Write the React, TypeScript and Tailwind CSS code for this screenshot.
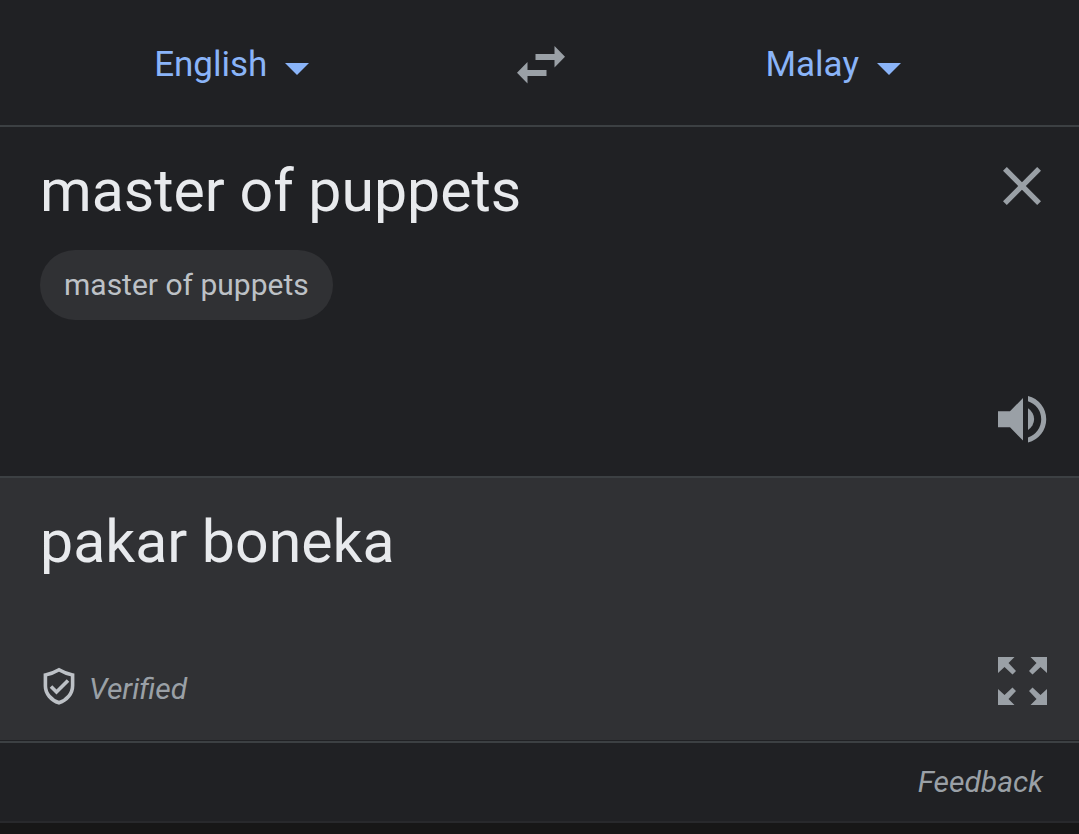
import React, { useState } from "react";

// ─── Icons ───────────────────────────────────────────────────────

function CaretIcon() {
  return (
    <svg width="24" height="12" viewBox="0 0 24 12" fill="currentColor" aria-hidden="true">
      <path d="M0 0h24L12 12z" />
    </svg>
  );
}

function SwapIcon() {
  return (
    <svg width="48" height="38" viewBox="0 0 48 38" fill="currentColor" aria-hidden="true">
      <path d="M18.5 8h19V0L48 10.8 37.5 21.5V14h-19z" />
      <path d="M29.5 24h-19v-8L0 26.8l10.5 10.7V30h19z" />
    </svg>
  );
}

function CloseIcon() {
  return (
    <svg width="38" height="38" viewBox="5 5 14 14" fill="currentColor" aria-hidden="true">
      <path d="M19 6.41 17.59 5 12 10.59 6.41 5 5 6.41 10.59 12 5 17.59 6.41 19 12 13.41 17.59 19 19 17.59 13.41 12z" />
    </svg>
  );
}

function SpeakerIcon() {
  return (
    <svg width="49" height="47" viewBox="0 0 49 47" fill="currentColor" aria-hidden="true">
      <path d="M0 15.3h12L25 2v42.5L12 31.3H0z" />
      <path d="M30 12.3a12.6 12.6 0 0 1 0 21.6z" />
      <path d="M30 0a24 24 0 0 1 0 46.6v-5.2a19 19 0 0 0 0-36.2z" />
    </svg>
  );
}

function ExpandIcon() {
  return (
    <svg width="49" height="48" viewBox="0 0 49 48" fill="currentColor" aria-hidden="true">
      <path d="M0 0h16.500l-6 6 7.500 8-3.500 3.500-8-7.500L0 16z" />
      <path d="M49 0H32.500l6 6-7.500 8 3.500 3.500 8-7.500L49 16z" />
      <path d="M0 48h16.500l-6-6 7.500-8-3.500-3.500-8 7.500L0 32z" />
      <path d="M49 48H32.500l6-6-7.500-8 3.500-3.500 8 7.500L49 32z" />
    </svg>
  );
}

function ShieldIcon() {
  return (
    <svg width="32" height="38" viewBox="0 0 32 38" fill="none" stroke="currentColor" strokeWidth="3.6" aria-hidden="true">
      <path d="M16 2.800c-4.400 2.600-8.800 4.400-13.600 5.200v11C2.400 26.500 8 33.200 16 35.800c8-2.600 13.600-9.300 13.600-17.400V8C24.800 7.200 20.400 5.400 16 2.800z" />
      <path d="M8 19.500l5.500 5.500L25 13.500" />
    </svg>
  );
}

// ─── Language picker ─────────────────────────────────────────────

interface LanguageSelectProps {
  label: string;
  value: string;
  options: string[];
  onChange: (value: string) => void;
}

function LanguageSelect({ label, value, options, onChange }: LanguageSelectProps) {
  return (
    <label className="flex items-center text-[#8ab4f8]">
      <span className="sr-only">{label}</span>
      <select
        value={value}
        onChange={(e) => onChange(e.target.value)}
        className="field-sizing-content h-14 cursor-pointer appearance-none bg-transparent py-0 pr-[18px] text-[35px] leading-[56px] outline-none"
      >
        {options.map((o) => (
          <option key={o}>{o}</option>
        ))}
      </select>
      <span className="pt-2">
        <CaretIcon />
      </span>
    </label>
  );
}

// ─── App ─────────────────────────────────────────────────────────

export default function App() {
  const [from, setFrom] = useState("English");
  const [to, setTo] = useState("Malay");
  const [text, setText] = useState("master of puppets");

  const swap = () => {
    setFrom(to);
    setTo(from);
  };

  return (
    <div className="flex min-h-screen flex-col bg-[#171717] font-[Roboto,sans-serif] text-[#e8eaed]">
      <header className="grid grid-cols-[1fr_152px_1fr] items-center border-b-2 border-[#3c4043] bg-[#202124] pt-[37px] pb-8">
        <div className="flex justify-center">
          <LanguageSelect label="Translate from" value={from} options={["English", "Malay"]} onChange={setFrom} />
        </div>
        <button
          type="button"
          aria-label="Swap languages"
          onClick={swap}
          className="flex justify-center pl-0.5 text-[#9aa0a6]"
        >
          <SwapIcon />
        </button>
        <div className="flex justify-center pr-7">
          <LanguageSelect label="Translate to" value={to} options={["English", "Malay"]} onChange={setTo} />
        </div>
      </header>

      <main>
        <section className="border-b-2 border-[#3c4043] bg-[#202124] pt-7 pr-8 pb-[33px] pl-10">
          <div className="flex items-start gap-6">
            <textarea
              aria-label="Source text"
              rows={1}
              value={text}
              onChange={(e) => setText(e.target.value)}
              className="h-[72px] min-w-0 flex-1 resize-none overflow-hidden bg-transparent text-[59px] leading-[72px] outline-none"
            />
            <button type="button" aria-label="Clear" className="mt-3 mr-1.5 text-[#9aa0a6]" onClick={() => setText("")}>
              <CloseIcon />
            </button>
          </div>
          <button
            type="button"
            className="mt-[23px] block rounded-full bg-[#303134] px-6 text-[30px] leading-[70px] text-[#bdc1c6]"
          >
            master of puppets
          </button>
          <div className="flex justify-end pt-[76px]">
            <button type="button" aria-label="Listen" className="text-[#9aa0a6]">
              <SpeakerIcon />
            </button>
          </div>
        </section>

        <section className="border-b-2 border-[#3c4043] bg-[#303134] pt-7 pr-8 pb-[34px] pl-10 shadow-[inset_0_-1px_0_#202124]">
          <p className="text-[59px] leading-[72px]">pakar boneka</p>
          <div className="flex items-start justify-between pt-[79px]">
            <div className="flex items-start gap-[14px] pt-2.5 pl-[3px] text-[#9aa0a6]">
              <span className="text-[#bdc1c6]">
                <ShieldIcon />
              </span>
              <span className="pt-1 text-[30px] leading-[36px] italic">Verified</span>
            </div>
            <button type="button" aria-label="Full screen" className="text-[#9aa0a6]">
              <ExpandIcon />
            </button>
          </div>
        </section>
      </main>

      <footer className="flex justify-end border-b-2 border-[#28292c] bg-[#202124] px-9 pt-[21px] pb-[21px]">
        <a href="#feedback" className="text-[30px] leading-[36px] text-[#9aa0a6] italic">
          Feedback
        </a>
      </footer>
    </div>
  );
}
